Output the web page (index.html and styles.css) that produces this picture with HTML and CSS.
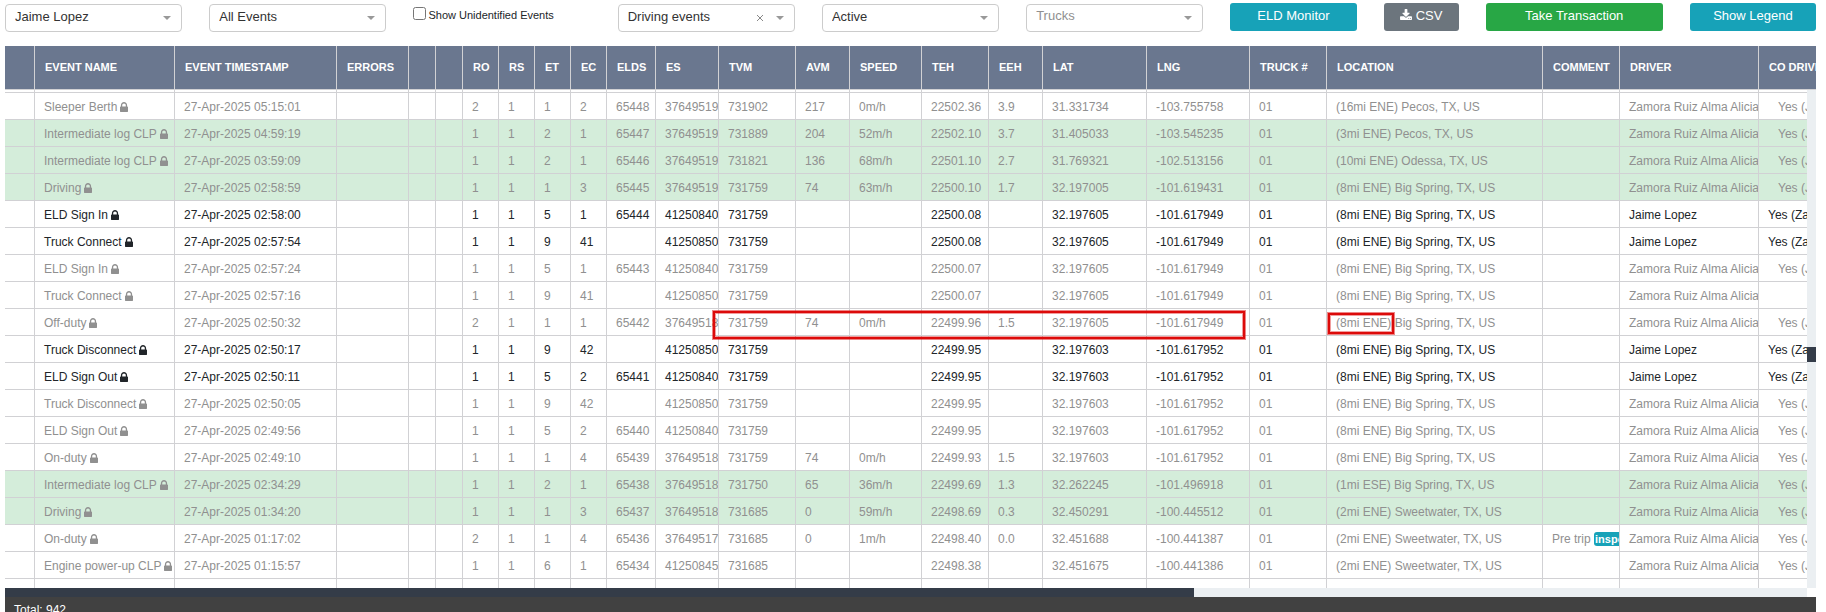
FILE: index.html
```html
<!DOCTYPE html>
<html lang="en">
<head>
<meta charset="utf-8">
<title>ELD Events</title>
<link rel="stylesheet" href="styles.css">
</head>
<body>
<svg class="sprite" aria-hidden="true">
  <symbol id="lock" viewBox="0 128 1152 1408"><path d="M320 768h512v-192q0-106-75-181t-181-75-181 75-75 181v192zm832 96v576q0 40-28 68t-68 28h-960q-40 0-68-28t-28-68v-576q0-40 28-68t68-28h32v-192q0-184 132-316t316-132 316 132 132 316v192h32q40 0 68 28t28 68z"/></symbol>
</svg>
<main class="page">
  <form class="toolbar">
    <div class="field"><select class="select" aria-label="Driver"><option>Jaime Lopez</option></select></div>
    <div class="field"><select class="select" aria-label="Event filter"><option>All Events</option></select></div>
    <div class="check"><input type="checkbox" class="check-box" id="unidentified"><label for="unidentified">Show Unidentified Events</label></div>
    <div class="field"><select class="select" aria-label="Event type"><option>Driving events</option></select><button type="button" class="clear" aria-label="Clear event type"><svg viewBox="0 0 8 8"><path d="M1 1l6 6M7 1l-6 6"/></svg></button></div>
    <div class="field"><select class="select" aria-label="Status"><option>Active</option></select></div>
    <div class="field"><select class="select placeholder" aria-label="Trucks"><option>Trucks</option></select></div>
    <button type="button" class="btn info">ELD Monitor</button>
    <button type="button" class="btn secondary"><svg class="download" viewBox="64 0 1664 1536"><path d="M1344 1344q0-26-19-45t-45-19-45 19-19 45 19 45 45 19 45-19 19-45zm256 0q0-26-19-45t-45-19-45 19-19 45 19 45 45 19 45-19 19-45zm128-224v320q0 40-28 68t-68 28h-1472q-40 0-68-28t-28-68v-320q0-40 28-68t68-28h465l135 136q58 56 136 56t136-56l136-136h464q40 0 68 28t28 68zm-325-569q17 41-14 70l-448 448q-18 19-45 19t-45-19l-448-448q-31-29-14-70 17-39 59-39h256v-448q0-26 19-45t45-19h256q26 0 45 19t19 45v448h256q42 0 59 39z"/></svg>CSV</button>
    <button type="button" class="btn success">Take Transaction</button>
    <button type="button" class="btn info">Show Legend</button>
  </form>

  <section class="grid">
    <div class="viewport">
      <table class="events">
        <colgroup id="cols"></colgroup>
        <thead><tr id="head"></tr></thead>
        <tbody id="rows"></tbody>
      </table>
      <div class="vbar"><div class="vthumb"></div></div>
      <div class="mark mark-readings"></div>
      <div class="mark mark-distance"></div>
    </div>
    <div class="hbar"><div class="hthumb"></div></div>
    <footer class="footer">Total: 942</footer>
  </section>
</main>
<script src="app.js"></script>
</body>
</html>
```
FILE: styles.css
```css
* { box-sizing: border-box; }

body {
  margin: 0;
  background: #fff;
  color: #212529;
  font: 12px/18px "Liberation Sans", Arial, sans-serif;
  overflow: hidden;
}

.sprite { position: absolute; width: 0; height: 0; }

.page {
  display: flex;
  flex-direction: column;
  height: 100vh;
  padding: 3px 10px 0 5px;
}

.toolbar {
  display: grid;
  grid-template-columns: 177fr 177fr 177fr 177fr 177fr 177fr 126fr 75fr 177fr 126fr;
  column-gap: 27px;
  height: 43px;
  align-items: start;
}

.field { position: relative; padding-top: 1px; }

.field::after {
  content: "";
  position: absolute;
  right: 11px;
  top: 13px;
  border: 4px solid transparent;
  border-top-color: #999;
  border-bottom: 0;
  pointer-events: none;
}

.select {
  display: block;
  width: 100%;
  height: 28px;
  padding: 0 24px 2px 9px;
  border: 1px solid #ccc;
  border-radius: 4px;
  background: #fff;
  color: #333;
  font: 13px/20px "Liberation Sans", Arial, sans-serif;
  appearance: none;
}

.select.placeholder { color: #909090; padding-bottom: 4px; }

.clear {
  position: absolute;
  right: 29px;
  top: 7px;
  width: 12px;
  height: 16px;
  padding: 0;
  border: 0;
  background: none;
  line-height: 0;
}

.clear svg { width: 8px; height: 8px; fill: none; stroke: #888; }

.check {
  display: flex;
  align-items: flex-start;
  padding-top: 3px;
  font-size: 11px;
  white-space: nowrap;
}

.check-box { width: 13px; height: 13px; margin: 1px 2px 0 0; }

.btn {
  height: 28px;
  padding: 0 0 3px;
  border: 0;
  border-radius: 3px;
  color: #fff;
  font: 13px/20px "Liberation Sans", Arial, sans-serif;
  white-space: nowrap;
}

.info { background: #17a2b8; }
.secondary { background: #6c757d; }
.success { background: #28a745; }

.download { width: 12px; height: 11px; margin-right: 4px; fill: #fff; }

.grid {
  display: flex;
  flex-direction: column;
  flex: 1;
  min-height: 0;
}

.viewport {
  position: relative;
  flex: 1;
  min-height: 0;
  overflow: hidden;
}

.events {
  width: 1880px;
  table-layout: fixed;
  border-collapse: separate;
  border-spacing: 0;
}

.events th,
.events td {
  overflow: hidden;
  border-right: 1px solid #d1d1d4;
  border-bottom: 1px solid #d1d1d4;
  text-align: left;
  white-space: nowrap;
}

.events th {
  height: 44px;
  padding: 0 0 2px 10px;
  background: #6a778f;
  color: #fff;
  font-size: 11px;
  font-weight: bold;
}

.events td { height: 27px; padding: 2px 0 0 9px; }

.events .sliver td { height: 3px; padding: 0; }
.muted { color: #909090; }
.driving { background: #d4edda; }
.events .indent { padding-left: 19px; }

.lock {
  width: 8px;
  height: 10px;
  margin-left: 3px;
  fill: currentColor;
  vertical-align: -1px;
}

.tag {
  padding: 1px;
  border-radius: 3px;
  background: #17a2b8;
  color: #fff;
  font-size: 11px;
  font-weight: bold;
}

.vbar {
  position: absolute;
  top: 44px;
  right: 0;
  bottom: 0;
  width: 9px;
  background: #ebeff2;
}

.vthumb { height: 15px; margin-top: 257px; background: #343c49; }

.mark {
  position: absolute;
  border: 2px solid #dc0a0a;
  box-shadow: 0 0 0 1px rgba(220, 10, 10, .5), inset 0 0 0 1px rgba(220, 10, 10, .4);
}

.mark-readings { left: 708px; top: 265px; width: 532px; height: 28px; }
.mark-distance { left: 1323px; top: 267px; width: 66px; height: 21px; }

.hbar { height: 9px; margin-right: 9px; background: #ebeff2; }
.hthumb { width: 66%; height: 9px; background: #343c48; }

.footer {
  height: 15px;
  padding: 4px 9px 0;
  overflow: hidden;
  background: #414141;
  color: #fff;
}
```
FILE: app.js
```js
const columns = [
  ["", 30], ["EVENT NAME", 140], ["EVENT TIMESTAMP", 162], ["ERRORS", 72], ["", 27], ["", 27],
  ["RO", 36], ["RS", 36], ["ET", 36], ["EC", 36], ["ELDS", 49], ["ES", 63], ["TVM", 77],
  ["AVM", 54], ["SPEED", 72], ["TEH", 67], ["EEH", 54], ["LAT", 104], ["LNG", 103],
  ["TRUCK #", 77], ["LOCATION", 216], ["COMMENT", 77], ["DRIVER", 139], ["CO DRIVER", 126],
];

// flags | name | time | RO | RS | ET | EC | ELDS | ES | TVM | AVM | speed | TEH | EEH | LAT | LNG | location | comment
// flags: g = driving row, a = entered by the selected driver, n = no co-driver
const events = `
|Sleeper Berth|05:15:01|2|1|1|2|65448|37649519|731902|217|0m/h|22502.36|3.9|31.331734|-103.755758|(16mi ENE) Pecos, TX, US|
g|Intermediate log CLP|04:59:19|1|1|2|1|65447|37649519|731889|204|52m/h|22502.10|3.7|31.405033|-103.545235|(3mi ENE) Pecos, TX, US|
g|Intermediate log CLP|03:59:09|1|1|2|1|65446|37649519|731821|136|68m/h|22501.10|2.7|31.769321|-102.513156|(10mi ENE) Odessa, TX, US|
g|Driving|02:58:59|1|1|1|3|65445|37649519|731759|74|63m/h|22500.10|1.7|32.197005|-101.619431|(8mi ENE) Big Spring, TX, US|
a|ELD Sign In|02:58:00|1|1|5|1|65444|41250840|731759|||22500.08||32.197605|-101.617949|(8mi ENE) Big Spring, TX, US|
a|Truck Connect|02:57:54|1|1|9|41||41250850|731759|||22500.08||32.197605|-101.617949|(8mi ENE) Big Spring, TX, US|
|ELD Sign In|02:57:24|1|1|5|1|65443|41250840|731759|||22500.07||32.197605|-101.617949|(8mi ENE) Big Spring, TX, US|
n|Truck Connect|02:57:16|1|1|9|41||41250850|731759|||22500.07||32.197605|-101.617949|(8mi ENE) Big Spring, TX, US|
|Off-duty|02:50:32|2|1|1|1|65442|37649518|731759|74|0m/h|22499.96|1.5|32.197605|-101.617949|(8mi ENE) Big Spring, TX, US|
a|Truck Disconnect|02:50:17|1|1|9|42||41250850|731759|||22499.95||32.197603|-101.617952|(8mi ENE) Big Spring, TX, US|
a|ELD Sign Out|02:50:11|1|1|5|2|65441|41250840|731759|||22499.95||32.197603|-101.617952|(8mi ENE) Big Spring, TX, US|
|Truck Disconnect|02:50:05|1|1|9|42||41250850|731759|||22499.95||32.197603|-101.617952|(8mi ENE) Big Spring, TX, US|
|ELD Sign Out|02:49:56|1|1|5|2|65440|41250840|731759|||22499.95||32.197603|-101.617952|(8mi ENE) Big Spring, TX, US|
|On-duty|02:49:10|1|1|1|4|65439|37649518|731759|74|0m/h|22499.93|1.5|32.197603|-101.617952|(8mi ENE) Big Spring, TX, US|
g|Intermediate log CLP|02:34:29|1|1|2|1|65438|37649518|731750|65|36m/h|22499.69|1.3|32.262245|-101.496918|(1mi ESE) Big Spring, TX, US|
g|Driving|01:34:20|1|1|1|3|65437|37649518|731685|0|59m/h|22498.69|0.3|32.450291|-100.445512|(2mi ENE) Sweetwater, TX, US|
|On-duty|01:17:02|2|1|1|4|65436|37649517|731685|0|1m/h|22498.40|0.0|32.451688|-100.441387|(2mi ENE) Sweetwater, TX, US|Pre trip <span class="tag">inspection</span>
|Engine power-up CLP|01:15:57|1|1|6|1|65434|41250845|731685|||22498.38||32.451675|-100.441386|(2mi ENE) Sweetwater, TX, US|
`.trim().split("\n").map(line => line.split("|"));

const lock = '<svg class="lock"><use href="#lock"/></svg>';
const cell = text => `<td>${text}</td>`;

function row([flags, name, time, ...rest]) {
  const own = flags === "a";
  const comment = rest.pop();
  const location = rest.pop();
  const classes = (own ? "" : "muted") + (flags === "g" ? " driving" : "");
  const co = flags === "n" ? "" : own ? "Yes (Zamora Ruiz Alma Alicia)" : "Yes (Jaime Lopez)";
  const cells = ["", name + lock, "27-Apr-2025 " + time, "", "", "", ...rest, "01",
    location, comment, own ? "Jaime Lopez" : "Zamora Ruiz Alma Alicia"];
  return `<tr class="${classes}">${cells.map(cell).join("")}<td class="${own ? "" : "indent"}">${co}</td></tr>`;
}

const blank = className => `<tr class="${className}">${columns.map(() => "<td></td>").join("")}</tr>`;

document.getElementById("cols").innerHTML = columns.map(c => `<col style="width:${c[1]}px">`).join("");
document.getElementById("head").innerHTML = columns.map(c => `<th scope="col">${c[0]}</th>`).join("");
document.getElementById("rows").innerHTML = blank("sliver") + events.map(row).join("") + blank("");
```
